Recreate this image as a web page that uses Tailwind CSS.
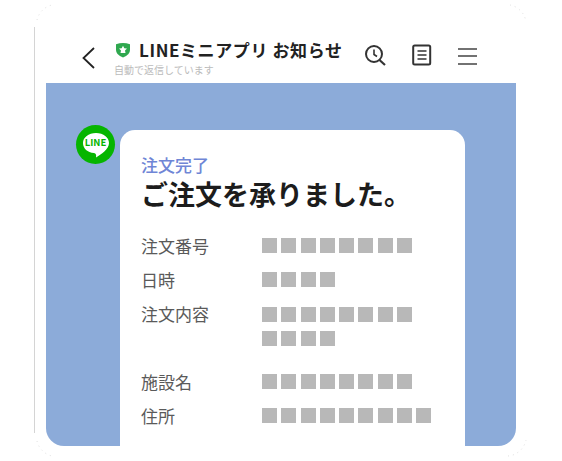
<!DOCTYPE html>
<html lang="ja"><head><meta charset="utf-8">
<script src="https://cdn.jsdelivr.net/npm/@tailwindcss/browser@4"></script>
</head>
<body class="m-0 bg-white">
<div class="relative w-[562px] h-[461px] overflow-hidden bg-white font-['Noto_Sans_CJK_JP','Noto_Sans',sans-serif] pl-[46px] pr-[46px] pt-[27px]">
  <!-- phone frame edge -->
  <div class="absolute left-[34px] top-[27px] w-px h-[406px] bg-[#d4d4d4]"></div>
  <svg class="absolute left-0 top-0" width="562" height="461" fill="none" stroke="#c8c8c8" stroke-width="0.6" stroke-dasharray="1 4">
    <path d="M37 20 A20 20 0 0 1 52 5"/>
    <path d="M510 5 A20 20 0 0 1 526 22"/>
    <path d="M37 441 A20 20 0 0 0 52 456"/>
    <path d="M508 456 A20 20 0 0 0 526 440"/>
  </svg>
  <!-- header -->
  <header class="relative flex items-start h-[56px] w-[470px]">
    <svg class="mt-[19px] ml-[35px] shrink-0" width="14" height="24" viewBox="0 0 14 24" fill="none" stroke="#222" stroke-width="1.8"><path d="M13 2 L2.5 12 L13 22"/></svg>
    <div class="ml-[19px] w-[238px] shrink-0">
      <div class="flex items-center h-[18px] mt-[14px] ml-[1px]">
        <svg width="16" height="16" viewBox="0 0 16 16" class="shrink-0"><path d="M1 2.2 Q8 0 15 2.2 V8 Q15 13 8 15.5 Q1 13 1 8Z" fill="#2fa84f"/><path d="M8 3.8 L9.3 6.3 L12 6.6 L10 8.5 L10.5 11 L5.5 11 L6 8.5 L4 6.6 L6.7 6.3Z" fill="#fff"/></svg>
        <span class="ml-[8px] text-[17px] leading-[18px] tracking-[0.6px] font-bold text-[#222] whitespace-nowrap">LINEミニアプリ お知らせ</span>
      </div>
      <p class="mt-[4px] text-[10px] leading-[14px] text-[#bbbbbb] whitespace-nowrap">自動で返信しています</p>
    </div>
    <div class="flex items-center mt-[17px] ml-[12px]">
      <svg width="22" height="22" viewBox="0 0 22 22" fill="none" stroke="#333" stroke-width="2"><circle cx="10" cy="10" r="8"/><path d="M10 5.5 V10.5 L13 12.5" stroke-width="1.6"/><path d="M15.5 16 L21 21" stroke-width="2.2"/></svg>
      <svg class="ml-[26px]" width="20" height="22" viewBox="0 0 20 22" fill="none" stroke="#333"><rect x="1.2" y="1.5" width="17" height="19" rx="1.5" stroke-width="2"/><path d="M5.5 7 H14.5 M5.5 11 H14.5 M5.5 15 H14.5" stroke-width="1.7"/></svg>
      <svg class="ml-[26px] mt-[1px]" width="19" height="20" viewBox="0 0 19 20" fill="none" stroke="#444" stroke-width="1.7"><path d="M0 3 H19 M0 10 H19 M0 18 H19"/></svg>
    </div>
  </header>
  <!-- chat area -->
  <main class="flex items-start h-[363px] w-[470px] bg-[#8cabd9] rounded-b-[18px] overflow-hidden pt-[47px]">
    <div class="relative flex items-center justify-center w-[39px] h-[39px] rounded-full bg-[#06b500] ml-[30px] -mt-[5px] shrink-0">
      <svg width="30" height="30" viewBox="0 0 30 30"><path d="M15 3 C22.5 3 28 7.5 28 13 C28 19 20 24.5 15 27.5 C15.5 25 15 23.2 13 23 C6.5 22.5 2 18.5 2 13 C2 7.5 7.5 3 15 3Z" fill="#fff"/></svg>
      <span class="absolute left-0 right-0 top-[12px] text-center text-[9.5px] leading-[10px] font-bold text-[#06b500]">LINE</span>
    </div>
    <article class="ml-[5px] w-[345px] h-[330px] bg-white rounded-t-[15px] pt-[25px] pl-[21px] text-[#5a5a5a]">
      <p class="text-[17px] leading-[20px] font-medium text-[#6f86d6]">注文完了</p>
      <h1 class="mt-[3px] text-[27px] leading-[32px] font-bold text-[#1c1c1c] whitespace-nowrap">ご注文を承りました。</h1>
      <dl class="mt-[24px] grid grid-cols-[121px_1fr] text-[17px] leading-[24px]">
        <dt class="h-[34px]">注文番号</dt>
        <dd class="flex gap-[4.3px] pt-[4px]">
          <i class="size-[15px] bg-[#b8b8b8]"></i><i class="size-[15px] bg-[#b8b8b8]"></i><i class="size-[15px] bg-[#b8b8b8]"></i><i class="size-[15px] bg-[#b8b8b8]"></i><i class="size-[15px] bg-[#b8b8b8]"></i><i class="size-[15px] bg-[#b8b8b8]"></i><i class="size-[15px] bg-[#b8b8b8]"></i><i class="size-[15px] bg-[#b8b8b8]"></i>
        </dd>
        <dt class="h-[34px]">日時</dt>
        <dd class="flex gap-[4.3px] pt-[4px]">
          <i class="size-[15px] bg-[#b8b8b8]"></i><i class="size-[15px] bg-[#b8b8b8]"></i><i class="size-[15px] bg-[#b8b8b8]"></i><i class="size-[15px] bg-[#b8b8b8]"></i>
        </dd>
        <dt class="h-[68px]">注文内容</dt>
        <dd class="pt-[5px]">
          <div class="flex gap-[4.3px]"><i class="size-[15px] bg-[#b8b8b8]"></i><i class="size-[15px] bg-[#b8b8b8]"></i><i class="size-[15px] bg-[#b8b8b8]"></i><i class="size-[15px] bg-[#b8b8b8]"></i><i class="size-[15px] bg-[#b8b8b8]"></i><i class="size-[15px] bg-[#b8b8b8]"></i><i class="size-[15px] bg-[#b8b8b8]"></i><i class="size-[15px] bg-[#b8b8b8]"></i></div>
          <div class="flex gap-[4.3px] mt-[9px]"><i class="size-[15px] bg-[#b8b8b8]"></i><i class="size-[15px] bg-[#b8b8b8]"></i><i class="size-[15px] bg-[#b8b8b8]"></i><i class="size-[15px] bg-[#b8b8b8]"></i></div>
        </dd>
        <dt class="h-[34px]">施設名</dt>
        <dd class="flex gap-[4.3px] pt-[4px]">
          <i class="size-[15px] bg-[#b8b8b8]"></i><i class="size-[15px] bg-[#b8b8b8]"></i><i class="size-[15px] bg-[#b8b8b8]"></i><i class="size-[15px] bg-[#b8b8b8]"></i><i class="size-[15px] bg-[#b8b8b8]"></i><i class="size-[15px] bg-[#b8b8b8]"></i><i class="size-[15px] bg-[#b8b8b8]"></i><i class="size-[15px] bg-[#b8b8b8]"></i>
        </dd>
        <dt class="h-[34px]">住所</dt>
        <dd class="flex gap-[4.3px] pt-[4px]">
          <i class="size-[15px] bg-[#b8b8b8]"></i><i class="size-[15px] bg-[#b8b8b8]"></i><i class="size-[15px] bg-[#b8b8b8]"></i><i class="size-[15px] bg-[#b8b8b8]"></i><i class="size-[15px] bg-[#b8b8b8]"></i><i class="size-[15px] bg-[#b8b8b8]"></i><i class="size-[15px] bg-[#b8b8b8]"></i><i class="size-[15px] bg-[#b8b8b8]"></i><i class="size-[15px] bg-[#b8b8b8]"></i>
        </dd>
      </dl>
    </article>
  </main>
</div>
</body></html>
